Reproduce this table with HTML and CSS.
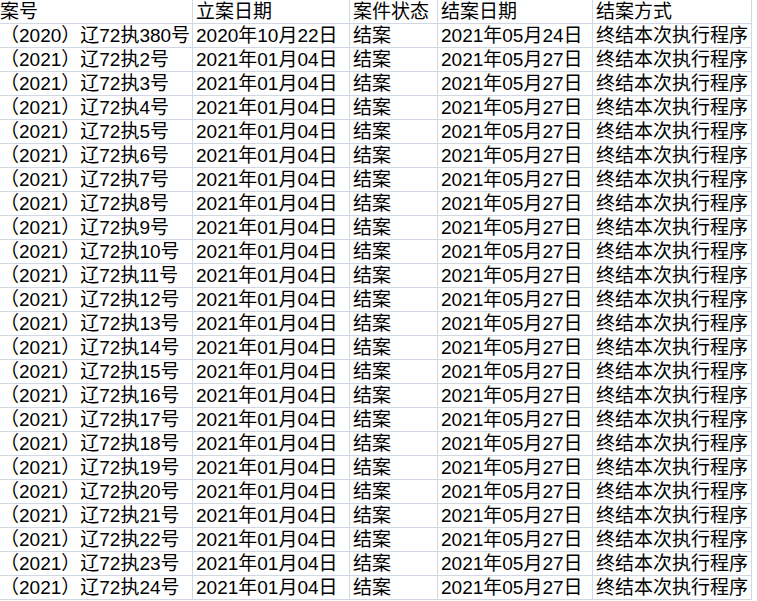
FILE: index.html
```html
<!DOCTYPE html>
<html lang="zh-CN">
<head>
  <meta charset="UTF-8">
  <meta name="viewport" content="width=device-width, initial-scale=1.0">
  <title>结案列表</title>
  <link rel="stylesheet" href="styles.css">
</head>
<body>
  <div class="sheet">
    <div class="cell first">案号</div><div class="cell">立案日期</div><div class="cell">案件状态</div><div class="cell">结案日期</div><div class="cell">结案方式</div>
    <div class="cell first">（2020）辽72执380号</div><div class="cell">2020年10月22日</div><div class="cell">结案</div><div class="cell">2021年05月24日</div><div class="cell">终结本次执行程序</div>
    <div class="cell first">（2021）辽72执2号</div><div class="cell">2021年01月04日</div><div class="cell">结案</div><div class="cell">2021年05月27日</div><div class="cell">终结本次执行程序</div>
    <div class="cell first">（2021）辽72执3号</div><div class="cell">2021年01月04日</div><div class="cell">结案</div><div class="cell">2021年05月27日</div><div class="cell">终结本次执行程序</div>
    <div class="cell first">（2021）辽72执4号</div><div class="cell">2021年01月04日</div><div class="cell">结案</div><div class="cell">2021年05月27日</div><div class="cell">终结本次执行程序</div>
    <div class="cell first">（2021）辽72执5号</div><div class="cell">2021年01月04日</div><div class="cell">结案</div><div class="cell">2021年05月27日</div><div class="cell">终结本次执行程序</div>
    <div class="cell first">（2021）辽72执6号</div><div class="cell">2021年01月04日</div><div class="cell">结案</div><div class="cell">2021年05月27日</div><div class="cell">终结本次执行程序</div>
    <div class="cell first">（2021）辽72执7号</div><div class="cell">2021年01月04日</div><div class="cell">结案</div><div class="cell">2021年05月27日</div><div class="cell">终结本次执行程序</div>
    <div class="cell first">（2021）辽72执8号</div><div class="cell">2021年01月04日</div><div class="cell">结案</div><div class="cell">2021年05月27日</div><div class="cell">终结本次执行程序</div>
    <div class="cell first">（2021）辽72执9号</div><div class="cell">2021年01月04日</div><div class="cell">结案</div><div class="cell">2021年05月27日</div><div class="cell">终结本次执行程序</div>
    <div class="cell first">（2021）辽72执10号</div><div class="cell">2021年01月04日</div><div class="cell">结案</div><div class="cell">2021年05月27日</div><div class="cell">终结本次执行程序</div>
    <div class="cell first">（2021）辽72执11号</div><div class="cell">2021年01月04日</div><div class="cell">结案</div><div class="cell">2021年05月27日</div><div class="cell">终结本次执行程序</div>
    <div class="cell first">（2021）辽72执12号</div><div class="cell">2021年01月04日</div><div class="cell">结案</div><div class="cell">2021年05月27日</div><div class="cell">终结本次执行程序</div>
    <div class="cell first">（2021）辽72执13号</div><div class="cell">2021年01月04日</div><div class="cell">结案</div><div class="cell">2021年05月27日</div><div class="cell">终结本次执行程序</div>
    <div class="cell first">（2021）辽72执14号</div><div class="cell">2021年01月04日</div><div class="cell">结案</div><div class="cell">2021年05月27日</div><div class="cell">终结本次执行程序</div>
    <div class="cell first">（2021）辽72执15号</div><div class="cell">2021年01月04日</div><div class="cell">结案</div><div class="cell">2021年05月27日</div><div class="cell">终结本次执行程序</div>
    <div class="cell first">（2021）辽72执16号</div><div class="cell">2021年01月04日</div><div class="cell">结案</div><div class="cell">2021年05月27日</div><div class="cell">终结本次执行程序</div>
    <div class="cell first">（2021）辽72执17号</div><div class="cell">2021年01月04日</div><div class="cell">结案</div><div class="cell">2021年05月27日</div><div class="cell">终结本次执行程序</div>
    <div class="cell first">（2021）辽72执18号</div><div class="cell">2021年01月04日</div><div class="cell">结案</div><div class="cell">2021年05月27日</div><div class="cell">终结本次执行程序</div>
    <div class="cell first">（2021）辽72执19号</div><div class="cell">2021年01月04日</div><div class="cell">结案</div><div class="cell">2021年05月27日</div><div class="cell">终结本次执行程序</div>
    <div class="cell first">（2021）辽72执20号</div><div class="cell">2021年01月04日</div><div class="cell">结案</div><div class="cell">2021年05月27日</div><div class="cell">终结本次执行程序</div>
    <div class="cell first">（2021）辽72执21号</div><div class="cell">2021年01月04日</div><div class="cell">结案</div><div class="cell">2021年05月27日</div><div class="cell">终结本次执行程序</div>
    <div class="cell first">（2021）辽72执22号</div><div class="cell">2021年01月04日</div><div class="cell">结案</div><div class="cell">2021年05月27日</div><div class="cell">终结本次执行程序</div>
    <div class="cell first">（2021）辽72执23号</div><div class="cell">2021年01月04日</div><div class="cell">结案</div><div class="cell">2021年05月27日</div><div class="cell">终结本次执行程序</div>
    <div class="cell first">（2021）辽72执24号</div><div class="cell">2021年01月04日</div><div class="cell">结案</div><div class="cell">2021年05月27日</div><div class="cell">终结本次执行程序</div>
  </div>
</body>
</html>
```

FILE: styles.css
```css
body {
  margin: 0;
  background: #ffffff;
  font-family: "Liberation Sans", "Noto Sans CJK SC", sans-serif;
  font-size: 19px;
  color: #000000;
}

/* gridlines come from the background showing through the 1px gaps */
.sheet {
  display: inline-grid;
  grid-template-columns: 192px 156px 87px 154px 158px;
  grid-auto-rows: 23px;
  gap: 1px;
  padding: 0 1px 1px 0;
  background: #d0d7e5;
  vertical-align: top;
}

.cell {
  background: #ffffff;
  line-height: 23px;
  padding: 0 0 0 3px;
  white-space: nowrap;
  overflow: hidden;
  text-spacing-trim: space-all;
}

.cell.first {
  padding-left: 0;
}
```
